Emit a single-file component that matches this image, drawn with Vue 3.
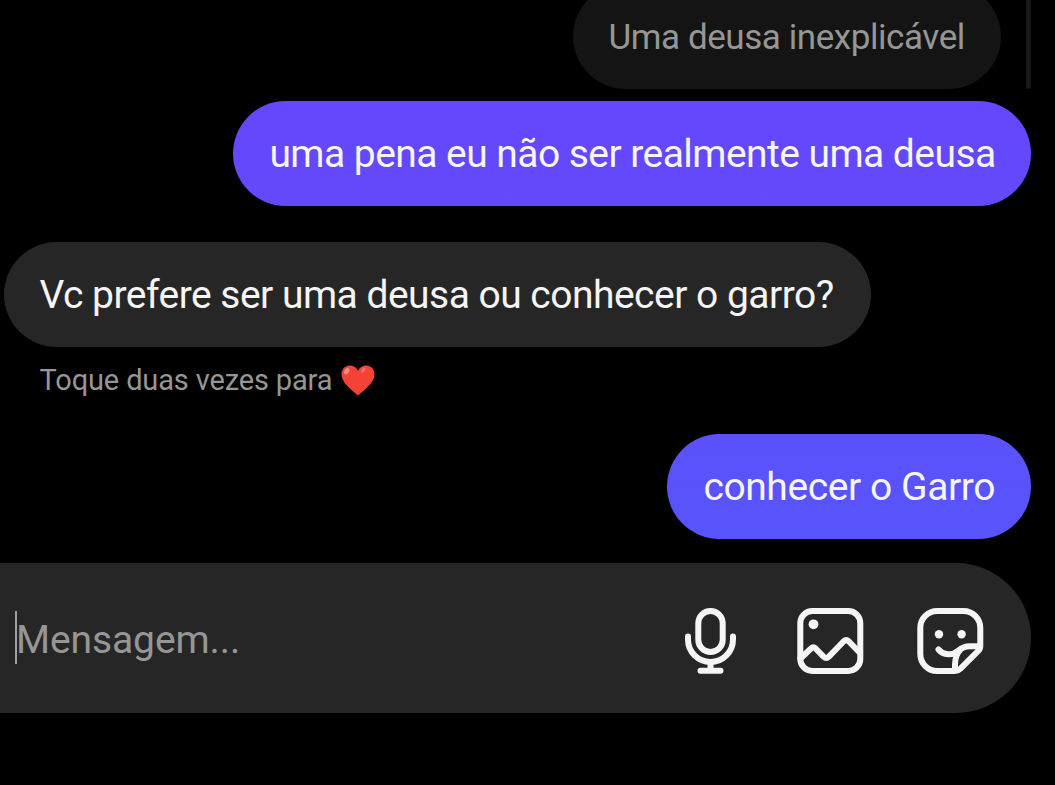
<template>
  <main class="chat">
    <section class="messages">
      <div class="quoted">
        <div class="bubble reply"><span>Uma deusa inexplicável</span></div>
        <div class="quote-bar"></div>
      </div>

      <div class="bubble sent first"><span>uma pena eu não ser realmente uma deusa</span></div>

      <div class="bubble received"><span>Vc prefere ser uma deusa ou conhecer o garro?</span></div>

      <p class="hint">
        <span>Toque duas vezes para</span>
        <svg class="heart" viewBox="0 0 33 30" aria-hidden="true">
          <path d="M16.500 29.500C11 25 0.500 17.500 0.500 9C0.500 4 4 0.500 8.500 0.500C12 0.500 15 2.500 16.500 5.500C18 2.500 21 0.500 24.500 0.500C29 0.500 32.500 4 32.500 9C32.500 17.500 22 25 16.500 29.500Z" fill="#f44336" />
          <ellipse cx="5.500" cy="6" rx="2.100" ry="3.300" transform="rotate(35 5.500 6)" fill="#ff8a80" />
          <ellipse cx="21.500" cy="5" rx="1.600" ry="2.800" transform="rotate(48 21.500 5)" fill="#fb6a60" />
        </svg>
      </p>

      <div class="bubble sent last"><span>conhecer o Garro</span></div>
    </section>

    <footer class="composer">
      <div class="field">
        <span class="caret"></span>
        <span class="placeholder">Mensagem...</span>
      </div>
      <div class="actions">
        <button class="icon-btn mic" aria-label="Microfone">
          <svg width="51" height="66" viewBox="0 0 51 66">
            <rect x="13.300" y="3" width="24.400" height="41" rx="12.200" />
            <path d="M3 28.500V31.500A22.500 22.500 0 0 0 48 31.500V28.500M25.500 54V62.500M15.500 62.700H35.500" />
          </svg>
        </button>
        <button class="icon-btn" aria-label="Galeria">
          <svg width="66" height="66" viewBox="0 0 66 66">
            <rect x="3.300" y="3" width="60" height="60" rx="12" />
            <path d="M3.500 50.500L14 40.500Q16.300 38.300 18.600 40.500L26.500 48.600Q29.200 51.200 31.900 48.600L46.500 33.500Q49.200 30.900 51.900 33.500L63 45" />
            <circle class="dot" cx="16.500" cy="16.300" r="4.900" />
          </svg>
        </button>
        <button class="icon-btn" aria-label="Figurinhas">
          <svg width="66" height="66" viewBox="0 0 66 66">
            <path d="M63.300 36V20A17 17 0 0 0 46.300 3H20.300A17 17 0 0 0 3.300 20V46A17 17 0 0 0 20.300 63H38Q41 63 43.200 60.800L61 43.200Q63.300 41 63.300 38V36" />
            <path d="M21.500 41.500C26.500 47.500 35.500 47.800 41.500 42.500C46 38.500 49 38.200 53 38.200H62M38 62V56.500C38 50.500 39 46 44 41" />
            <circle class="dot" cx="22" cy="26.300" r="4.200" />
            <circle class="dot" cx="44.600" cy="26.300" r="4.200" />
          </svg>
        </button>
      </div>
    </footer>
  </main>
</template>

<script setup>
</script>

<style>
body {
  margin: 0;
  background: #000;
}
</style>

<style scoped>
.chat {
  width: 1055px;
  height: 785px;
  overflow: hidden;
  background: #000;
  font-family: Roboto, "Noto Sans", sans-serif;
  color: #f5f5f5;
}

.messages {
  height: 563px;
  box-sizing: border-box;
  padding: 0 24px 0 4px;
  display: flex;
  flex-direction: column;
}

.quoted {
  height: 88.5px;
  display: flex;
  justify-content: flex-end;
  align-items: flex-end;
  gap: 25px;
}

.bubble {
  height: 105px;
  box-sizing: border-box;
  flex-shrink: 0;
  padding: 0 36px;
  border-radius: 52.5px;
  display: flex;
  align-items: center;
  font-size: 39px;
  letter-spacing: -0.55px;
  white-space: nowrap;
}

.reply {
  width: 428px;
  padding-top: 3px;
  background: #141414;
  color: #969696;
  font-size: 35px;
  letter-spacing: -0.43px;
}

.quote-bar {
  width: 5.5px;
  height: 88.5px;
  border-radius: 0 0 3px 3px;
  background: #181818;
}

.sent {
  align-self: flex-end;
}

.first {
  width: 798px;
  padding-left: 36.4px;
  margin-top: 12.5px;
  background: linear-gradient(#6646fe, #624afa);
}

.received {
  width: 866.5px;
  padding-left: 35.5px;
  margin-top: 36px;
  background: #262626;
  letter-spacing: -0.52px;
}

.hint {
  height: 30px;
  margin: 18px 0 0 35.5px;
  display: flex;
  align-items: center;
  gap: 9px;
  font-size: 29px;
  letter-spacing: -0.14px;
  color: #969696;
}

.heart {
  width: 34px;
  height: 31px;
}

.last {
  width: 364px;
  padding-left: 36.4px;
  margin-top: 39px;
  background: linear-gradient(#5b51fc, #5854fb);
  letter-spacing: -0.42px;
}

.composer {
  width: 1031px;
  height: 150px;
  box-sizing: border-box;
  padding: 0 48px 0 15px;
  border-radius: 0 75px 75px 0;
  background: #262626;
  display: flex;
  align-items: center;
  justify-content: space-between;
}

.field {
  display: flex;
  align-items: center;
}

.caret {
  width: 2px;
  height: 53px;
  margin: 0 -1px 2px 0;
  background: #a0a0a0;
}

.placeholder {
  padding-top: 4px;
  font-size: 39px;
  letter-spacing: -0.1px;
  color: #969696;
}

.actions {
  display: flex;
  align-items: center;
  gap: 54px;
  padding-top: 6px;
}

.icon-btn {
  display: block;
  padding: 0;
  border: 0;
  background: none;
  cursor: pointer;
}

.mic {
  margin-right: 7px;
}

.icon-btn svg {
  display: block;
  overflow: visible;
  fill: none;
  stroke: #f5f5f5;
  stroke-width: 6;
  stroke-linecap: round;
  stroke-linejoin: round;
}

.icon-btn .dot {
  fill: #f5f5f5;
  stroke: none;
}
</style>
